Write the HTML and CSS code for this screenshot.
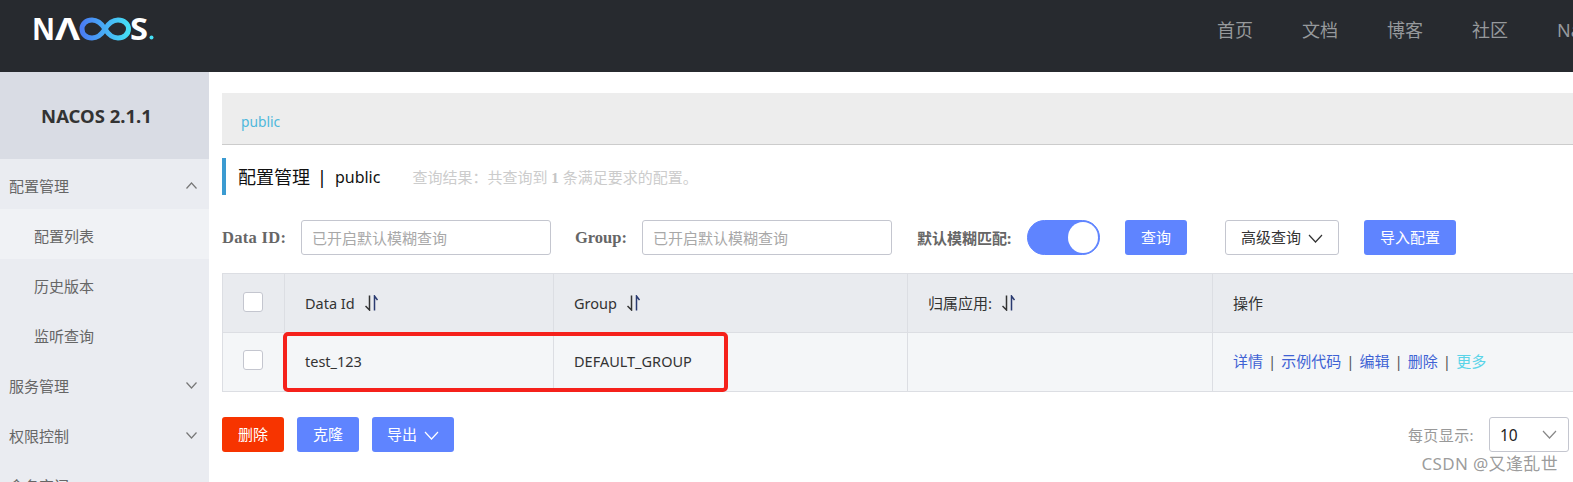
FILE: index.html
```html
<!DOCTYPE html>
<html lang="zh-CN">
<head>
<meta charset="utf-8">
<title>Nacos</title>
<link rel="stylesheet" href="styles.css">
</head>
<body>
<header class="topbar">
  <svg class="logo" width="160" height="72" viewBox="0 0 160 72" role="img" aria-label="NACOS">
    <defs>
      <linearGradient id="inf" x1="0" x2="1" y1="0" y2="0">
        <stop offset="0" stop-color="#4a7df5"/>
        <stop offset="1" stop-color="#45dff5"/>
      </linearGradient>
    </defs>
    <text class="logo-text" x="32" y="40" textLength="23" lengthAdjust="spacingAndGlyphs">N</text>
    <text class="logo-text" x="55" y="40" textLength="25" lengthAdjust="spacingAndGlyphs">Λ</text>
    <path d="M105 29C101 22.500 97 20 92 20C86 20 82 24 82 29C82 34 86 38 92 38C97 38 101 35.500 105 29C109 22.500 113 20 118 20C124 20 128.500 24 128.500 29C128.500 34 124 38 118 38C113 38 109 35.500 105 29Z" fill="none" stroke="url(#inf)" stroke-width="5"/>
    <text class="logo-text" x="130" y="40" textLength="18" lengthAdjust="spacingAndGlyphs">S</text>
    <circle cx="151.500" cy="37.500" r="2" fill="#45dff5"/>
  </svg>
  <nav class="topnav">
    <a>首页</a>
    <a>文档</a>
    <a>博客</a>
    <a>社区</a>
    <a>Nacos</a>
  </nav>
</header>

<div class="layout">
  <aside class="sidebar">
    <div class="version">NACOS 2.1.1</div>
    <div class="menu-group">配置管理
      <svg class="chev" width="11" height="7" viewBox="0 0 11 7"><path d="M0.500 6.500L5.500 1L10.500 6.500"/></svg>
    </div>
    <div class="menu-item active">配置列表</div>
    <div class="menu-item">历史版本</div>
    <div class="menu-item">监听查询</div>
    <div class="menu-group">服务管理
      <svg class="chev" width="11" height="7" viewBox="0 0 11 7"><path d="M0.500 0.500L5.500 6L10.500 0.500"/></svg>
    </div>
    <div class="menu-group">权限控制
      <svg class="chev" width="11" height="7" viewBox="0 0 11 7"><path d="M0.500 0.500L5.500 6L10.500 0.500"/></svg>
    </div>
    <div class="menu-group">命名空间</div>
  </aside>

  <main class="content">
    <div class="crumb"><a>public</a></div>

    <div class="title">
      <h1>配置管理<span class="bar">|</span><span class="ns">public</span></h1>
      <span class="result">查询结果：共查询到 <b>1</b> 条满足要求的配置。</span>
    </div>

    <form class="search">
      <label class="label-id">Data ID:</label>
      <input class="field" type="text" placeholder="已开启默认模糊查询">
      <label class="label-group">Group:</label>
      <input class="field" type="text" placeholder="已开启默认模糊查询">
      <label class="label-fuzzy">默认模糊匹配:</label>
      <span class="switch"><i></i></span>
      <button class="btn btn-query" type="button">查询</button>
      <button class="btn btn-plain" type="button">高级查询
        <svg class="drop" width="15" height="9" viewBox="0 0 15 9"><path d="M1 1L7.500 8L14 1"/></svg>
      </button>
      <button class="btn btn-import" type="button">导入配置</button>
    </form>

    <div class="table">
      <div class="th cell-check"><span class="check"></span></div>
      <div class="th latin">Data Id
        <svg class="sort" width="13" height="16" viewBox="0 0 13 16"><path class="sort-a" d="M4.500 0.500V15L0.500 11"/><path class="sort-b" d="M9.500 15.500V1L12.500 5"/></svg>
      </div>
      <div class="th latin">Group
        <svg class="sort" width="13" height="16" viewBox="0 0 13 16"><path class="sort-a" d="M4.500 0.500V15L0.500 11"/><path class="sort-b" d="M9.500 15.500V1L12.500 5"/></svg>
      </div>
      <div class="th">归属应用:
        <svg class="sort" width="13" height="16" viewBox="0 0 13 16"><path class="sort-a" d="M4.500 0.500V15L0.500 11"/><path class="sort-b" d="M9.500 15.500V1L12.500 5"/></svg>
      </div>
      <div class="th">操作</div>

      <div class="td cell-check"><span class="check"></span></div>
      <div class="td latin">test_123</div>
      <div class="td latin">DEFAULT_GROUP</div>
      <div class="td"></div>
      <div class="td actions">
        <a>详情</a><span class="sep">|</span><a>示例代码</a><span class="sep">|</span><a>编辑</a><span class="sep">|</span><a>删除</a><span class="sep">|</span><a class="more">更多</a>
      </div>
      <div class="mark"></div>
    </div>

    <div class="footer">
      <div class="bulk">
        <button class="btn btn-danger" type="button">删除</button>
        <button class="btn btn-bulk" type="button">克隆</button>
        <button class="btn btn-export" type="button">导出
          <svg class="drop" width="15" height="9" viewBox="0 0 15 9"><path d="M1 1L7.500 8L14 1"/></svg>
        </button>
      </div>
      <div class="pager">
        <span class="pager-label">每页显示:</span>
        <div class="select">10
          <svg class="drop" width="15" height="9" viewBox="0 0 15 9"><path d="M1 1L7.500 8L14 1"/></svg>
        </div>
      </div>
    </div>
  </main>
</div>

<div class="watermark">CSDN @又逢乱世</div>
</body>
</html>
```

FILE: styles.css
```css
html, body {
  margin: 0;
  padding: 0;
  height: 482px;
  overflow: hidden;
  background: #fff;
}

body {
  position: relative;
  font: 15px/20px "Noto Sans", "Noto Sans CJK SC", sans-serif;
  color: #333;
}

/* top bar */
.topbar {
  display: flex;
  justify-content: space-between;
  height: 72px;
  background: #272a2f;
}

.logo {
  flex: none;
}

.logo-text {
  font: 700 31px "Open Sans", sans-serif;
  fill: #fff;
}

.topnav {
  display: flex;
  flex: none;
  gap: 49px;
  width: 356px;
  padding-top: 18px;
  font-size: 18px;
  line-height: 24px;
  color: #96999c;
}

.topnav a {
  white-space: nowrap;
}

/* sidebar */
.layout {
  display: flex;
  height: 410px;
  overflow: hidden;
}

.sidebar {
  flex: none;
  width: 209px;
  background: #eaecf1;
  font-size: 15px;
  color: #666;
}

.version {
  box-sizing: border-box;
  height: 87px;
  padding-right: 16px;
  background: #d9dce4;
  font-size: 18.500px;
  font-weight: 700;
  line-height: 87px;
  text-align: center;
  color: #333;
}

.menu-group,
.menu-item {
  height: 50px;
  line-height: 54px;
}

.menu-group {
  position: relative;
  padding-left: 9px;
}

.menu-item {
  padding-left: 34px;
}

.menu-item.active {
  background: #f0f2f5;
}

.chev {
  position: absolute;
  right: 12px;
  top: 23px;
}

.chev path,
.drop path {
  fill: none;
  stroke: #777;
  stroke-width: 1.200;
}

/* main */
.content {
  flex: 1;
  min-width: 0;
  margin-right: -10px;
  padding: 21px 0 0 13px;
}

.crumb {
  height: 51px;
  border-bottom: 1px solid #ccc;
  background: #ededed;
  padding-left: 19px;
  font-size: 13.800px;
  line-height: 57px;
  color: #4fb8dc;
}

.title {
  display: flex;
  align-items: center;
  height: 37px;
  margin-top: 13px;
  border-left: 4px solid #3b9bd1;
  padding-left: 12px;
}

.title h1 {
  display: flex;
  margin: 0;
  font-size: 18px;
  font-weight: 400;
  color: #111;
}

.bar {
  margin: 0 8px 0 7px;
  color: #000;
}

.ns {
  font-size: 16px;
}

.result {
  margin-left: 32px;
  padding-top: 2px;
  font-size: 15px;
  color: #ccc;
}

.result b {
  font-family: "Liberation Serif", serif;
  color: #c5c5c5;
}

.search {
  display: flex;
  align-items: center;
  height: 35px;
  margin-top: 25px;
}

.search label {
  font-weight: 700;
  color: #666;
  white-space: nowrap;
}

.label-id,
.label-group {
  font-family: "Liberation Serif", "Noto Sans CJK SC", serif;
  font-size: 16.500px;
}

.label-id {
  width: 79px;
  letter-spacing: 0.300px;
}

.label-group {
  width: 67px;
  margin-left: 24px;
}

.label-fuzzy {
  width: 110px;
  margin-left: 25px;
}

.field {
  box-sizing: border-box;
  width: 250px;
  height: 35px;
  margin: 0;
  border: 1px solid #c4c6cf;
  border-radius: 3px;
  padding: 0 10px;
  font: 15px "Noto Sans", "Noto Sans CJK SC", sans-serif;
}

.field::placeholder {
  color: #a8a8a8;
}

.switch {
  box-sizing: border-box;
  display: flex;
  justify-content: flex-end;
  width: 73px;
  height: 35px;
  border: 1px solid #5f84ff;
  border-radius: 18px;
  padding: 1px;
  background: #5f84ff;
}

.switch i {
  width: 30px;
  height: 31px;
  border-radius: 50%;
  background: #fff;
}

.btn {
  box-sizing: border-box;
  height: 35px;
  margin: 0;
  border: 1px solid transparent;
  border-radius: 3px;
  padding: 0 0 3px;
  font: 15px "Noto Sans", "Noto Sans CJK SC", sans-serif;
  color: #fff;
  background: #5f84ff;
  white-space: nowrap;
}

.btn-query {
  width: 62px;
  margin-left: 25px;
}

.btn-plain {
  width: 114px;
  margin-left: 38px;
  border-color: #c4c6cf;
  background: #fff;
  color: #333;
}

.btn-import {
  width: 92px;
  margin-left: 25px;
}

.drop {
  margin-left: 3px;
}

.btn-plain .drop path {
  stroke: #333;
}

/* table */
.table {
  position: relative;
  display: grid;
  grid-template-columns: 62px 269px 354px 305px 1fr;
  grid-template-rows: 59px 59px;
  margin-top: 18px;
  border-top: 1px solid #dcdee3;
  border-left: 1px solid #dcdee3;
}

.th,
.td {
  box-sizing: border-box;
  display: flex;
  align-items: center;
  gap: 10px;
  border-right: 1px solid #dcdee3;
  border-bottom: 1px solid #dcdee3;
  padding-left: 20px;
  white-space: nowrap;
}

.th {
  background: #e9ebef;
}

.td {
  padding-bottom: 2px;
  background: #f4f6f8;
}

.latin {
  font-size: 14.500px;
}

.cell-check {
  padding-left: 20px;
}

.check {
  box-sizing: border-box;
  width: 20px;
  height: 20px;
  margin-top: -3px;
  border: 1px solid #c4c6cf;
  border-radius: 3px;
  background: #fff;
}

.sort {
  flex: none;
}

.sort path {
  fill: none;
  stroke-width: 1.500;
}

.sort-a {
  stroke: #333;
}

.sort-b {
  stroke: #2a3a70;
}

.actions {
  gap: 0;
  color: #3e62d4;
}

.sep {
  margin: 0 5px;
  color: #555;
}

.more {
  color: #5bd4e8;
}

.mark {
  position: absolute;
  left: 60px;
  top: 58px;
  box-sizing: border-box;
  width: 445px;
  height: 60px;
  border: 4px solid #f5211b;
  border-radius: 5px;
}

/* bottom */
.footer {
  display: flex;
  justify-content: space-between;
  margin-top: 25px;
  padding-right: 14px;
}

.bulk {
  display: flex;
  gap: 13px;
}

.btn-danger {
  width: 62px;
  background: #f73400;
}

.btn-bulk {
  width: 62px;
}

.btn-export {
  width: 82px;
}

.btn-export .drop path {
  stroke: #fff;
}

.pager {
  display: flex;
  align-items: center;
  gap: 15px;
  color: #999;
}

.pager-label {
  letter-spacing: 0.400px;
}

.select {
  box-sizing: border-box;
  display: flex;
  align-items: center;
  justify-content: space-between;
  width: 80px;
  height: 35px;
  border: 1px solid #c4c6cf;
  border-radius: 3px;
  padding: 0 11px 0 10px;
  font-size: 15.500px;
  color: #222;
}

.select .drop path {
  stroke: #888;
}

.watermark {
  position: absolute;
  right: 15px;
  top: 453px;
  font-size: 17px;
  line-height: 22px;
  letter-spacing: 0.350px;
  color: rgba(130, 130, 130, 0.8);
}
```
